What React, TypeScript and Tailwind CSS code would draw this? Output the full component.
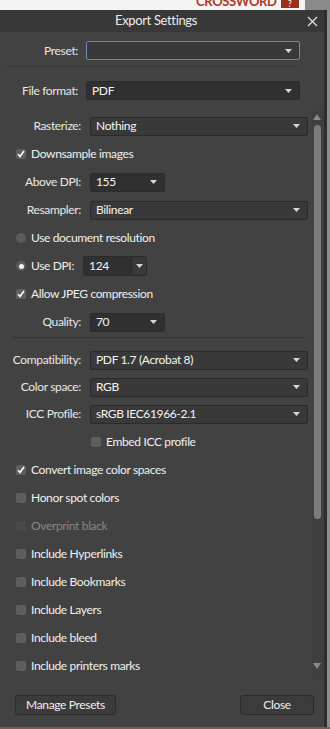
import React from "react";

const font = "font-['Segoe_UI','Lato','Open_Sans',sans-serif]";

function Arrow() {
  return (
    <svg width="7" height="4" viewBox="0 0 7 4" className="shrink-0">
      <path d="M0 0H7L3.5 4Z" fill="#d6d6d6" />
    </svg>
  );
}

function Dropdown({
  value,
  width,
  dark,
  focused,
}: {
  value: string;
  width: string;
  dark?: boolean;
  focused?: boolean;
}) {
  return (
    <div
      className={`flex h-[19px] items-center justify-between rounded-[2px] border pl-[5px] pr-[7px] ${width} ${
        focused ? "border-[#6f88b3]" : "border-[#2b2b2b]"
      } ${dark ? "bg-[#303030]" : "bg-[#393939]"}`}
    >
      <span className="text-[#f4f4f4]">{value}</span>
      <Arrow />
    </div>
  );
}

function Check({ checked, disabled }: { checked?: boolean; disabled?: boolean }) {
  return (
    <div
      className={`flex h-[10px] w-[10px] shrink-0 items-center justify-center rounded-[2px] ${
        disabled ? "bg-[#4a4a4a]" : "bg-[#5e5e5e]"
      }`}
    >
      {checked && (
        <svg width="8" height="8" viewBox="0 0 8 8">
          <path d="M1 4.3L3 6.5L7 1" fill="none" stroke="#fff" strokeWidth="1.6" />
        </svg>
      )}
    </div>
  );
}

function Radio({ checked }: { checked?: boolean }) {
  return (
    <div className="flex h-[10px] w-[10px] shrink-0 items-center justify-center rounded-full bg-[#5c5c5c]">
      {checked && <div className="h-[5px] w-[5px] rounded-full bg-[#f2f2f2]" />}
    </div>
  );
}

function CheckRow({
  label,
  checked,
  disabled,
  h = "h-[28px]",
}: {
  label: string;
  checked?: boolean;
  disabled?: boolean;
  h?: string;
}) {
  return (
    <div className={`flex items-center gap-[5px] pl-[16px] ${h}`}>
      <Check checked={checked} disabled={disabled} />
      <span className={disabled ? "text-[#868686]" : "text-[#f0f0f0]"}>{label}</span>
    </div>
  );
}

function FieldRow({
  label,
  children,
  h = "h-[28px]",
}: {
  label: string;
  children: React.ReactNode;
  h?: string;
}) {
  return (
    <div className={`flex items-center ${h}`}>
      <span className="w-[82px] pr-[1px] text-right text-[#e8e8e8]">{label}</span>
      <div className="ml-[8px]">{children}</div>
    </div>
  );
}

export default function App() {
  return (
    <div
      className={`flex h-[729px] w-[330px] flex-col overflow-hidden bg-white text-[12px] tracking-[-0.35px] ${font}`}
    >
      {/* desktop strip behind the dialog */}
      <div className="flex h-[10px] shrink-0 overflow-hidden">
        <div className="flex w-[305px] items-start bg-[#f4f4f4] pl-[196px]">
          <span className="mt-[-5px] text-[13px] font-bold leading-none text-[#b23a26]">CROSSWORD</span>
          <span className="ml-[4px] flex h-[8px] w-[18px] items-end justify-center bg-[#9a2e1f] text-[9px] leading-none text-white">
            ?
          </span>
        </div>
        <div className="flex-1 bg-[#8a8a8a]" />
      </div>

      <div className="flex flex-1">
        <div className="flex w-[327px] flex-col border-r-[3px] border-[#2e2e2e] bg-[#424242]">
          {/* title bar */}
          <div className="flex h-[22px] shrink-0 items-center bg-[#383838]">
            <span className="pl-[115px] text-[13px] text-[#ececec]">Export Settings</span>
            <svg width="11" height="11" viewBox="0 0 11 11" className="ml-auto mr-[6px]">
              <path d="M1 1L10 10M10 1L1 10" stroke="#e0e0e0" strokeWidth="1.3" />
            </svg>
          </div>

          {/* fixed header */}
          <div className="mt-[9px] flex items-center">
            <span className="w-[78px] text-right text-[#e8e8e8]">Preset:</span>
            <div className="ml-[8px]">
              <Dropdown value="" width="w-[214px]" focused />
            </div>
          </div>
          <div className="ml-[7px] mt-[6px] h-px w-[290px] bg-[#363636]" />
          <div className="mt-[14px] flex items-center">
            <span className="w-[78px] text-right text-[#e8e8e8]">File format:</span>
            <div className="ml-[8px]">
              <Dropdown value="PDF" width="w-[214px]" dark />
            </div>
          </div>

          {/* scrolling settings */}
          <div className="mt-[11px] flex h-[569px]">
            <div className="flex w-[312px] flex-col pt-[1px]">
              <FieldRow label="Rasterize:">
                <Dropdown value="Nothing" width="w-[218px]" />
              </FieldRow>
              <CheckRow label="Downsample images" checked />
              <FieldRow label="Above DPI:">
                <Dropdown value="155" width="w-[75px]" dark />
              </FieldRow>
              <FieldRow label="Resampler:">
                <Dropdown value="Bilinear" width="w-[218px]" />
              </FieldRow>
              <div className="flex h-[28px] items-center gap-[5px] pl-[16px]">
                <Radio />
                <span className="text-[#f0f0f0]">Use document resolution</span>
              </div>
              <div className="flex h-[28px] items-center gap-[5px] pl-[16px]">
                <Radio checked />
                <span className="text-[#f0f0f0]">Use DPI:</span>
                <div className="ml-[4px] flex h-[20px] w-[64px] overflow-hidden rounded-[2px] border border-[#2b2b2b]">
                  <div className="flex flex-1 items-center bg-[#303030] pl-[5px] text-[#f4f4f4]">124</div>
                  <div className="flex w-[15px] items-center justify-center border-l border-[#2b2b2b] bg-[#393939]">
                    <Arrow />
                  </div>
                </div>
              </div>
              <CheckRow label="Allow JPEG compression" checked />
              <FieldRow label="Quality:">
                <Dropdown value="70" width="w-[75px]" dark />
              </FieldRow>

              <div className="ml-[11px] mt-[1px] h-px w-[294px] bg-[#363636]" />

              <div className="mt-[8px]">
                <FieldRow label="Compatibility:">
                  <Dropdown value="PDF 1.7 (Acrobat 8)" width="w-[218px]" />
                </FieldRow>
                <FieldRow label="Color space:" h="h-[26px]">
                  <Dropdown value="RGB" width="w-[218px]" />
                </FieldRow>
                <FieldRow label="ICC Profile:">
                  <Dropdown value="sRGB IEC61966-2.1" width="w-[218px]" />
                </FieldRow>
                <div className="flex h-[27px] items-center gap-[5px] pl-[91px]">
                  <Check />
                  <span className="text-[#f0f0f0]">Embed ICC profile</span>
                </div>
                <CheckRow label="Convert image color spaces" checked h="h-[29px]" />
                <CheckRow label="Honor spot colors" />
                <CheckRow label="Overprint black" disabled />
                <CheckRow label="Include Hyperlinks" />
                <CheckRow label="Include Bookmarks" />
                <CheckRow label="Include Layers" />
                <CheckRow label="Include bleed" />
                <CheckRow label="Include printers marks" />
              </div>
            </div>

            {/* scrollbar */}
            <div className="flex w-[12px] flex-col items-center bg-[#3f3f3f] pr-[2px]">
              <svg width="8" height="6" viewBox="0 0 8 6" className="mt-[3px]">
                <path d="M0 6H8L4 0Z" fill="#8a8a8a" />
              </svg>
              <div className="mt-[5px] h-[394px] w-[7px] rounded-full bg-[#7b7b7b]" />
              <svg width="8" height="6" viewBox="0 0 8 6" className="mt-auto mb-[11px]">
                <path d="M0 0H8L4 6Z" fill="#8a8a8a" />
              </svg>
            </div>
          </div>

          {/* footer buttons */}
          <div className="mt-[15px] flex px-[15px] pr-[10px]">
            <button className="h-[20px] w-[101px] rounded-[3px] border border-[#2c2c2c] bg-[#3b3b3b] text-[#f0f0f0]">
              Manage Presets
            </button>
            <button className="ml-auto h-[20px] w-[74px] rounded-[3px] border border-[#2c2c2c] bg-[#3b3b3b] text-[#f0f0f0]">
              Close
            </button>
          </div>
        </div>
        <div className="flex-1 bg-[#8d8d8d]" />
      </div>
      <div className="h-[2px] shrink-0 bg-[#6d6253]" />
    </div>
  );
}
